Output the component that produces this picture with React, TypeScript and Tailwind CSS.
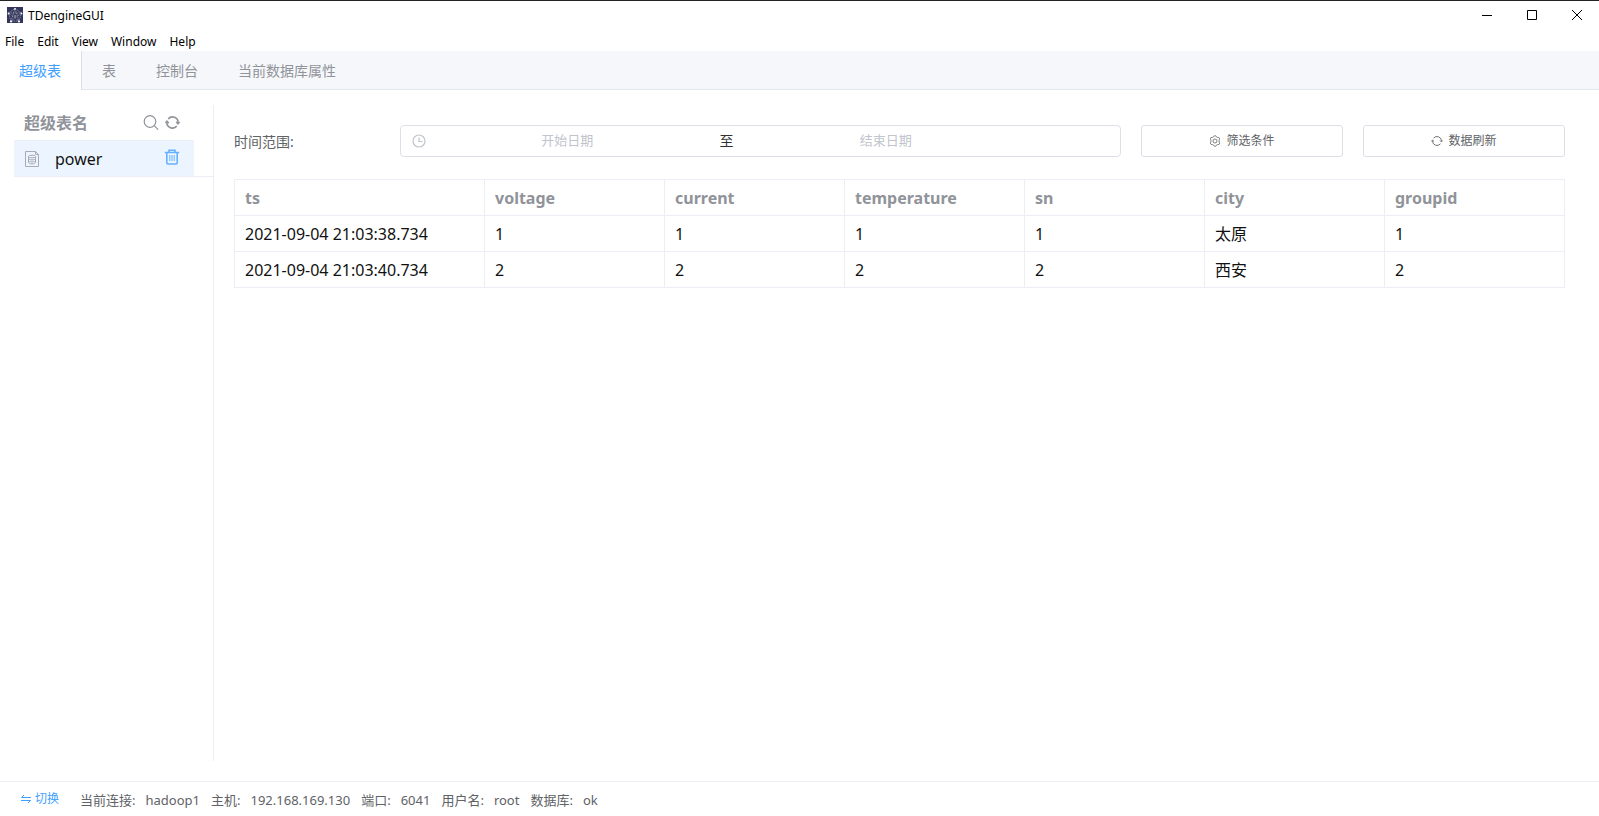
import { useState } from "react";

const MENUS = ["File", "Edit", "View", "Window", "Help"];
const TABS = ["超级表", "表", "控制台", "当前数据库属性"];
const COLUMNS = ["ts", "voltage", "current", "temperature", "sn", "city", "groupid"];
const ROWS = [
  ["2021-09-04 21:03:38.734", "1", "1", "1", "1", "太原", "1"],
  ["2021-09-04 21:03:40.734", "2", "2", "2", "2", "西安", "2"],
];
const STATUS = [
  { label: "当前连接:", value: "hadoop1" },
  { label: "主机:", value: "192.168.169.130" },
  { label: "端口:", value: "6041" },
  { label: "用户名:", value: "root" },
  { label: "数据库:", value: "ok" },
];

function AppLogo() {
  return (
    <svg viewBox="0 0 16 16" className="size-4" aria-hidden="true">
      <rect width="16" height="16" fill="#33355a" />
      <g stroke="#c9cbd8" strokeWidth="0.6" fill="none" strokeDasharray="1.2 0.8">
        <path d="M8 1.5 14.5 6 12 14H4L1.5 6Z" />
        <path d="M8 1.5 4 14 14.5 6H1.5L12 14Z" />
      </g>
      <g fill="#f4f4f8">
        <circle cx="8" cy="1.8" r="0.9" />
        <circle cx="1.5" cy="6.5" r="0.9" />
        <circle cx="14.5" cy="6.5" r="0.9" />
        <circle cx="4" cy="14.5" r="1.1" />
        <circle cx="12" cy="14.5" r="1.1" />
        <circle cx="8" cy="9" r="0.7" />
      </g>
    </svg>
  );
}

function SearchIcon() {
  return (
    <svg viewBox="0 0 16 16" className="size-4" fill="none" stroke="currentColor" strokeWidth="1.2" aria-hidden="true">
      <circle cx="7" cy="6.5" r="5.8" />
      <path d="m11.2 10.7 4 4" />
    </svg>
  );
}

function RefreshIcon({ className, weight }: { className: string; weight: number }) {
  return (
    <svg viewBox="0 0 16 16" className={className} fill="none" stroke="currentColor" strokeWidth={weight} aria-hidden="true">
      <path d="M3.4 4.2A6 6 0 0 1 14 8.2M12.6 11.8A6 6 0 0 1 2 7.8" />
      <path d="m12 7.400 1.900 1.900 1.600-1.900M.5 8.600l1.600-1.900L4 8.600" />
    </svg>
  );
}

function TableIcon() {
  return (
    <svg viewBox="0 0 16 18" className="h-[18px] w-4" fill="none" stroke="currentColor" aria-hidden="true">
      <path d="M1.5 1.5h10l3 3v12h-13ZM11.5 1.5v3h3" />
      <ellipse cx="8" cy="6.5" rx="3.5" ry="1.3" />
      <path d="M4.5 6.5v6c0 1.8 7 1.8 7 0v-6M4.5 8.5c0 1.8 7 1.8 7 0M4.5 10.5c0 1.8 7 1.8 7 0" />
    </svg>
  );
}

function TrashIcon() {
  return (
    <svg viewBox="0 0 16 16" className="size-4" fill="none" stroke="currentColor" aria-hidden="true">
      <path d="M.8 3.5h14.4M5 3V1.200h6V3M2.800 3.500v10.300q0 1.200 1.200 1.200h8q1.200 0 1.200-1.200V3.500" strokeWidth="1.6" />
      <path d="M5.800 6v6M8 6v6M10.200 6v6" />
    </svg>
  );
}

function ClockIcon() {
  return (
    <svg viewBox="0 0 14 14" className="size-[14px]" fill="none" stroke="currentColor" strokeWidth="1.2" aria-hidden="true">
      <circle cx="7" cy="7" r="6" />
      <path d="M7 3.5V7.5H10.5" />
    </svg>
  );
}

function GearIcon() {
  return (
    <svg viewBox="0 0 12 12" className="size-3" fill="none" stroke="currentColor" strokeWidth="0.8" aria-hidden="true">
      <path d="M4.600 1.800 5.200.800h1.600l.6 1 1.300.7 1.200 0 .8 1.400-.6 1v2.200l.6 1-.8 1.400H8.700l-1.300.7-.6 1H5.200l-.6-1-1.300-.7H2.100L1.300 8.100l.6-1V4.900l-.6-1 .8-1.400h1.200Z" />
      <circle cx="6" cy="6" r="2" />
    </svg>
  );
}

function SwapIcon() {
  return (
    <svg viewBox="0 0 12 12" className="size-3" fill="none" stroke="currentColor" aria-hidden="true">
      <path d="M11 4.5H1.5L4 2M1 7.5h9.5L8 10" />
    </svg>
  );
}

function TitleBar() {
  return (
    <header className="border-t border-[#222] text-black">
      <div className="flex h-7 items-center justify-between pl-[7px]">
        <div className="flex items-center gap-[5px] text-xs">
          <AppLogo />
          <h1 className="pt-[2px]">TDengineGUI</h1>
        </div>
        <div className="flex">
          <button aria-label="Minimize" className="flex h-7 w-[45px] items-center justify-center">
            <svg width="10" height="10" stroke="currentColor"><path d="M0 5.5h10" /></svg>
          </button>
          <button aria-label="Maximize" className="flex h-7 w-[45px] items-center justify-center">
            <svg width="10" height="10" fill="none" stroke="currentColor"><path d="M.5.5h9v9h-9Z" /></svg>
          </button>
          <button aria-label="Close" className="flex h-7 w-[45px] items-center justify-center">
            <svg width="10" height="10" stroke="currentColor"><path d="m0 0 10 10M10 0 0 10" /></svg>
          </button>
        </div>
      </div>
      <nav className="flex h-[22px] items-end gap-[13px] pb-px pl-[5px] text-xs">
        {MENUS.map((m) => (
          <button key={m}>{m}</button>
        ))}
      </nav>
    </header>
  );
}

export default function App() {
  const [tab, setTab] = useState(0);

  return (
    <div className="flex min-h-screen flex-col bg-white font-['Noto_Sans','Noto_Sans_CJK_SC',sans-serif] text-[#606266]">
      <TitleBar />

      <div role="tablist" className="flex h-[39px] border-b border-[#e4e7ed] bg-[#f5f7fa] text-sm">
        {TABS.map((t, i) => (
          <button
            key={t}
            role="tab"
            aria-selected={i === tab}
            onClick={() => setTab(i)}
            className={
              i === tab
                ? "-mb-px h-[39px] border-r border-[#dcdfe6] bg-white pr-5 pl-[19px] text-[#409eff]"
                : "px-5 pt-[2px] text-[#909399]"
            }
          >
            {t}
          </button>
        ))}
      </div>

      <div className="flex flex-1 pt-[15px] pb-5 pl-[14px]">
        <aside className="w-[200px] border-r border-[#ebeef5]">
          <div className="mr-[19px] flex h-9 items-center justify-between border-b border-[#ebeef5] pr-[14px] pl-[10px] text-[#909399]">
            <h2 className="text-base font-bold">超级表名</h2>
            <div className="flex items-center gap-[6px]">
              <button aria-label="搜索"><SearchIcon /></button>
              <button aria-label="刷新"><RefreshIcon className="size-[15px]" weight={1.7} /></button>
            </div>
          </div>
          <ul className="border-b border-[#ebeef5]">
            <li className="mr-[19px] flex h-[35px] items-center bg-[#ecf5ff] pr-[14px] pl-[10px]">
              <span className="text-[#a8abb2]"><TableIcon /></span>
              <span className="ml-[15px] flex-1 text-base text-[#111]">power</span>
              <button aria-label="删除" className="pb-1 text-[#66b1ff]"><TrashIcon /></button>
            </li>
          </ul>
        </aside>

        <main className="flex-1 pt-5 pr-[34px] pl-5">
          <div className="flex gap-5">
            <span className="w-[146px] pt-[7px] text-sm">时间范围:</span>
            <div className="flex h-8 flex-1 items-center rounded border border-[#dcdfe6] px-[11px] text-[13px]">
              <span className="text-[#c0c4cc]"><ClockIcon /></span>
              <input
                aria-label="开始日期"
                placeholder="开始日期"
                className="min-w-0 flex-1 text-center outline-none placeholder:text-[#c0c4cc]"
              />
              <span className="w-9 text-center text-sm text-[#303133]">至</span>
              <input
                aria-label="结束日期"
                placeholder="结束日期"
                className="min-w-0 flex-1 text-center outline-none placeholder:text-[#c0c4cc]"
              />
              <span className="w-[82px]" />
            </div>
            <button className="flex h-8 w-[202px] items-center justify-center gap-[5px] rounded-[3px] border border-[#dcdfe6] text-xs">
              <GearIcon />
              筛选条件
            </button>
            <button className="flex h-8 w-[202px] items-center justify-center gap-[5px] rounded-[3px] border border-[#dcdfe6] text-xs">
              <RefreshIcon className="size-3" weight={1.2} />
              数据刷新
            </button>
          </div>

          <table className="mt-[22px] w-full table-fixed border-collapse text-left text-base">
            <colgroup>
              <col className="w-[250px]" />
            </colgroup>
            <thead>
              <tr className="h-9 text-[#909399]">
                {COLUMNS.map((c) => (
                  <th key={c} className="border border-[#ebeef5] px-[10px] font-bold">{c}</th>
                ))}
              </tr>
            </thead>
            <tbody>
              {ROWS.map((row) => (
                <tr key={row[0]} className="h-9 text-[#111]">
                  {row.map((cell, i) => (
                    <td key={i} className="border border-[#ebeef5] px-[10px]">{cell}</td>
                  ))}
                </tr>
              ))}
            </tbody>
          </table>
        </main>
      </div>

      <footer className="flex h-[35px] items-center gap-[11px] border-t border-[#ebeef5] pl-5 text-[13px]">
        <button className="mr-[10px] flex items-center gap-[3px] text-xs text-[#409eff]">
          <SwapIcon />
          切换
        </button>
        {STATUS.map((s) => (
          <span key={s.label} className="flex gap-[10px] pt-[3px]">
            <span>{s.label}</span>
            <span>{s.value}</span>
          </span>
        ))}
      </footer>
    </div>
  );
}
